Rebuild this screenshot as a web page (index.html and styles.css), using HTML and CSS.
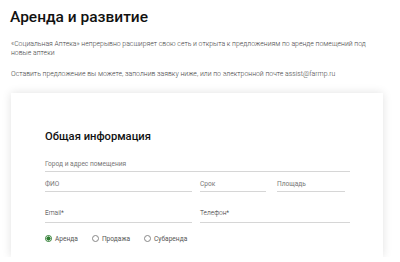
FILE: index.html
```html
<!DOCTYPE html>
<html lang="ru">
<head>
    <meta charset="UTF-8">
    <meta name="viewport" content="width=device-width, initial-scale=1.0">
    <title>Аренда и развитие</title>
    <link rel="stylesheet" href="styles.css">
</head>
<body>
    <div class="page">
        <h1>Аренда и развитие</h1>
        <p class="intro">«Социальная Аптека» непрерывно расширяет свою сеть и открыта к предложениям по аренде помещений под новые аптеки</p>
        <p class="intro">Оставить предложение вы можете, заполнив заявку ниже, или по электронной почте assist@farmp.ru</p>

        <div class="card">
            <h2>Общая информация</h2>
            <form class="form">
                <div class="field field-full">
                    <span class="label">Город и адрес помещения</span>
                </div>
                <div class="field">
                    <span class="label">ФИО</span>
                </div>
                <div class="field-pair">
                    <div class="field">
                        <span class="label">Срок</span>
                    </div>
                    <div class="field">
                        <span class="label">Площадь</span>
                    </div>
                </div>
                <div class="field field-req">
                    <span class="label">Email*</span>
                </div>
                <div class="field field-req">
                    <span class="label">Телефон*</span>
                </div>
                <div class="radios field-full">
                    <label class="radio checked"><span class="dot"></span>Аренда</label>
                    <label class="radio"><span class="dot"></span>Продажа</label>
                    <label class="radio"><span class="dot"></span>Субаренда</label>
                </div>
            </form>
        </div>
    </div>
</body>
</html>
```

FILE: styles.css
```css
/* Общие стили */
body {
    margin: 0;
    padding: 0;
    background-color: #fff;
    font-family: Roboto, "Liberation Sans", sans-serif;
    color: #222;
}

.page {
    padding: 8px 17px 0 11px;
}

h1 {
    margin: 0 0 13px -1px;
    font-size: 15.5px;
    font-weight: 500;
    line-height: 19px;
    color: #111;
}

.intro {
    margin: 0 0 13px;
    font-size: 6.9px;
    line-height: 8.5px;
    font-weight: 300;
    color: #444;
    padding-right: 5px;
}

/* Карточка формы */
.card {
    margin-top: 14px;
    background-color: #fff;
    box-shadow: 0 0 9px rgba(0, 0, 0, 0.12);
    padding: 37px 35px 14px 34px;
}

h2 {
    margin: 0 0 13px;
    font-size: 11.2px;
    font-weight: 500;
    line-height: 14px;
    color: #111;
}

.form {
    display: grid;
    grid-template-columns: 147px 150px;
    column-gap: 8px;
    row-gap: 5px;
}

.field {
    border-bottom: 1px solid #d6d6d6;
    padding: 3px 0 3px;
}

.field-full {
    grid-column: 1 / 3;
}

.field-pair {
    display: grid;
    grid-template-columns: 66px 68px;
    column-gap: 11px;
}

.label {
    font-size: 6.6px;
    line-height: 8px;
    color: #777;
    display: block;
}

.field-req {
    margin-top: 6px;
    padding-top: 6px;
    padding-bottom: 5px;
}

.field-req .label {
    color: #333;
    font-weight: 300;
}

/* Переключатели */
.radios {
    display: flex;
    gap: 14px;
    padding-top: 7px;
}

.radio {
    display: inline-flex;
    align-items: center;
    gap: 3px;
    font-size: 6.6px;
    line-height: 8px;
    color: #555;
}

.dot {
    width: 5px;
    height: 5px;
    border: 1px solid #888;
    border-radius: 50%;
    box-sizing: content-box;
}

.radio.checked .dot {
    border-color: #2e7d32;
    background: radial-gradient(circle, #2e7d32 55%, #fff 60%);
}
```
